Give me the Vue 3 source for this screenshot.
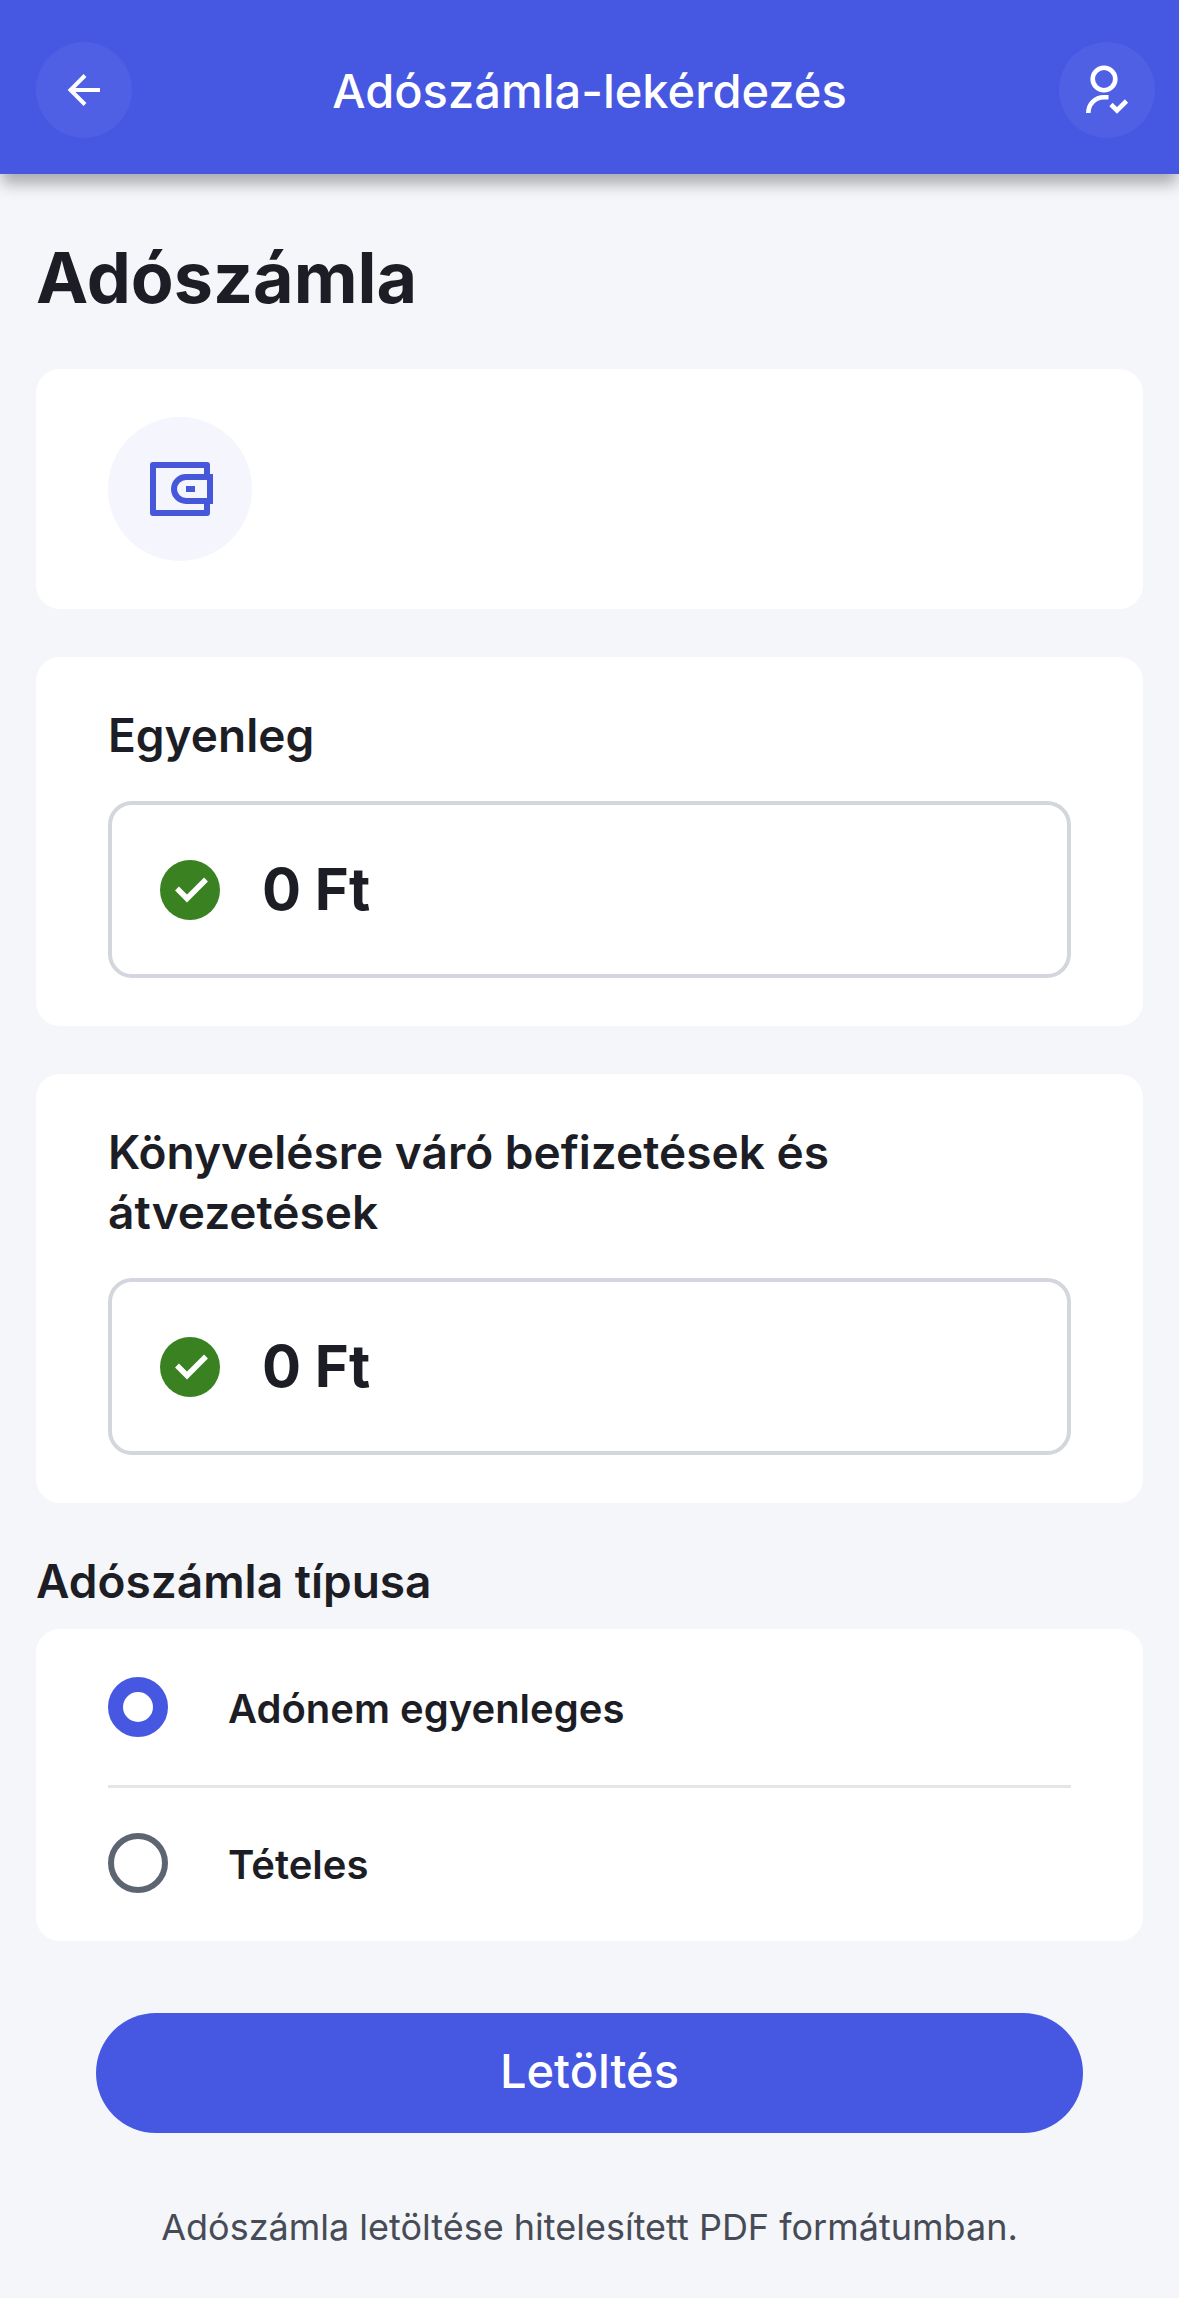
<script setup>
import { ref } from 'vue'

const balances = [
  { id: 'balance', label: 'Egyenleg', amount: '0 Ft' },
  { id: 'pending', label: 'Könyvelésre váró befizetések és átvezetések', amount: '0 Ft' }
]

const types = [
  { value: 'summary', label: 'Adónem egyenleges' },
  { value: 'detailed', label: 'Tételes' }
]

const selectedType = ref('summary')
</script>

<template>
  <div class="page">
    <header class="topbar">
      <button class="round" type="button" aria-label="Vissza">
        <svg viewBox="0 0 96 96" fill="none" stroke="currentColor" stroke-width="4" aria-hidden="true">
          <path d="M64 48H35M49 33.500L34.500 48L49 62.500" />
        </svg>
      </button>
      <h1 class="topbar-title">Adószámla-lekérdezés</h1>
      <button class="round" type="button" aria-label="Profil">
        <svg viewBox="0 0 96 96" fill="none" stroke="currentColor" stroke-width="4.600" aria-hidden="true">
          <circle cx="45" cy="37" r="11.300" />
          <path d="M29.300 71C29.300 62 36 55.300 45 55.300H49.500" />
          <path d="M52 62.500L58 68.500L67.500 59" />
        </svg>
      </button>
    </header>

    <main class="content">
      <h2 class="heading">Adószámla</h2>

      <section class="card account" aria-label="Adózó">
        <span class="account-icon">
          <svg viewBox="0 0 72 72" fill="none" stroke="currentColor" stroke-width="6" aria-hidden="true">
            <path d="M63 24V12H9V60H63V48" stroke-linejoin="round" />
            <path d="M66 24H42A12 12 0 0 0 42 48H66Z" />
            <rect x="42" y="33" width="9" height="6" fill="currentColor" stroke="none" />
          </svg>
        </span>
      </section>

      <section v-for="item in balances" :key="item.id" class="card balance">
        <h3 class="label">{{ item.label }}</h3>
        <div class="amount-box">
          <svg class="status" viewBox="0 0 60 60" aria-hidden="true">
            <circle cx="30" cy="30" r="30" fill="#3a8122" />
            <path d="M17 28.500L27 38.500L46 19.500" fill="none" stroke="#fff" stroke-width="5.500" />
          </svg>
          <span class="amount">{{ item.amount }}</span>
        </div>
      </section>

      <fieldset class="types">
        <legend class="label">Adószámla típusa</legend>
        <div class="card options">
          <label v-for="type in types" :key="type.value" class="option">
            <input v-model="selectedType" type="radio" name="account-type" :value="type.value" />
            <span class="option-text">{{ type.label }}</span>
          </label>
        </div>
      </fieldset>

      <button class="download" type="button">Letöltés</button>
      <p class="note">Adószámla letöltése hitelesített PDF formátumban.</p>
    </main>
  </div>
</template>

<style>
body {
  margin: 0;
  background: #f4f6fa;
}
</style>

<style scoped>
.page {
  min-height: 100vh;
  background: #f4f6fa;
  color: #1d1e25;
  font-family: Inter, "Liberation Sans", sans-serif;
}

.page * {
  box-sizing: border-box;
}

button {
  border: 0;
  font-family: inherit;
  cursor: pointer;
}

.topbar {
  display: flex;
  align-items: center;
  justify-content: space-between;
  padding: 42px 24px 36px 36px;
  background: #4657e2;
  color: #fff;
  box-shadow: 0 12px 14px -2px rgba(0, 0, 0, 0.3);
}

.topbar-title {
  flex: 1;
  margin: 0 12px 0 0;
  padding-top: 2px;
  font-size: 47px;
  line-height: 60px;
  font-weight: 500;
  text-align: center;
}

.round {
  flex: none;
  width: 96px;
  height: 96px;
  padding: 0;
  border-radius: 50%;
  background: #4f60e5;
  color: #fff;
}

.round svg {
  display: block;
  width: 100%;
}

.content {
  display: flex;
  flex-direction: column;
  gap: 48px;
  padding: 60px 36px 36px;
}

.heading {
  margin: 0;
  font-size: 70px;
  line-height: 87px;
  font-weight: 700;
}

.card {
  border-radius: 24px;
  background: #fff;
}

.account {
  padding: 48px 72px;
}

.account-icon {
  display: flex;
  align-items: center;
  justify-content: center;
  width: 144px;
  height: 144px;
  border-radius: 50%;
  background: #f4f5fd;
  color: #4657d9;
}

.account-icon svg {
  width: 72px;
  height: 72px;
}

.balance {
  display: flex;
  flex-direction: column;
  gap: 36px;
  padding: 48px 72px;
}

.label {
  margin: 0;
  padding: 0;
  font-size: 46px;
  line-height: 60px;
  font-weight: 600;
}

.amount-box {
  display: flex;
  align-items: center;
  gap: 42px;
  padding: 48px;
  border: 4px solid #d3d6dd;
  border-radius: 24px;
}

.status {
  flex: none;
  width: 60px;
  height: 60px;
}

.amount {
  font-size: 58px;
  line-height: 73px;
  font-weight: 700;
}

.types {
  margin: 0;
  padding: 0;
  border: 0;
  min-width: 0;
}

.options {
  margin-top: 18px;
  padding: 0 72px;
}

.option {
  display: flex;
  align-items: center;
  gap: 60px;
  height: 156px;
  cursor: pointer;
}

.option + .option {
  box-shadow: inset 0 3px #e5e6e8;
}

.option-text {
  padding-top: 4px;
  font-size: 40px;
  line-height: 54px;
  font-weight: 600;
}

.option input {
  appearance: none;
  flex: none;
  width: 60px;
  height: 60px;
  margin: 0;
  border: 6px solid #5c6571;
  border-radius: 50%;
  background: #fff;
}

.option input:checked {
  border: 15px solid #4657e2;
}

.download {
  margin: 24px 60px 0;
  padding: 28px 30px 32px;
  border-radius: 60px;
  background: #4657e2;
  color: #fff;
  font-size: 47px;
  line-height: 60px;
  font-weight: 500;
}

.note {
  margin: 22px 0 0;
  color: #474b55;
  font-size: 36px;
  line-height: 48px;
  text-align: center;
}
</style>
